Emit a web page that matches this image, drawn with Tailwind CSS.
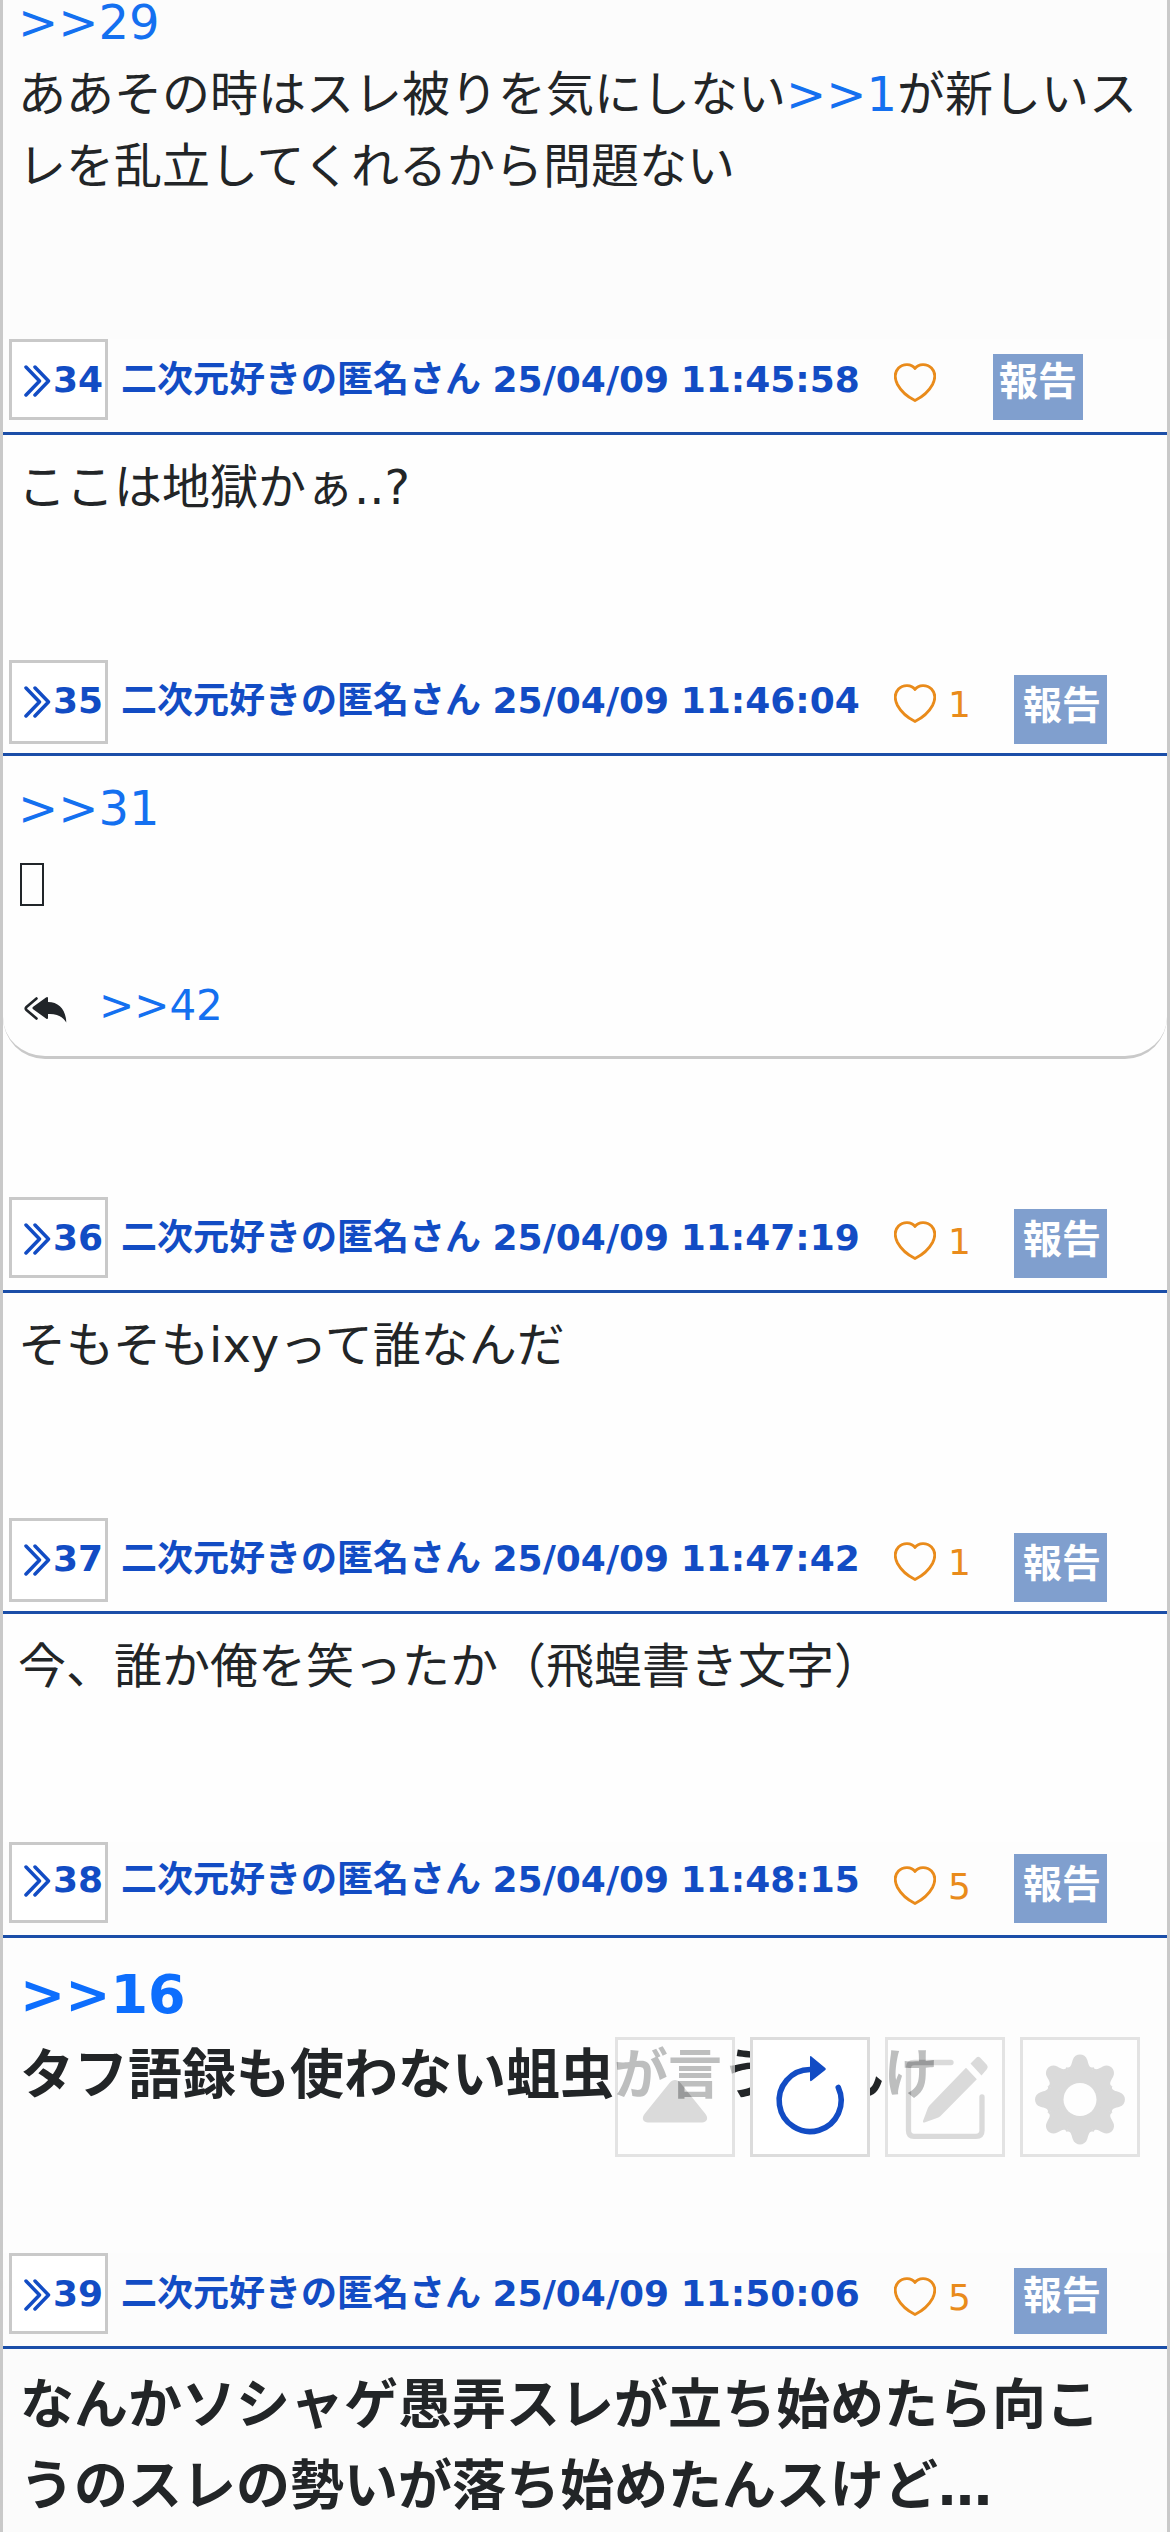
<!DOCTYPE html>
<html lang="ja"><head><meta charset="utf-8"><title>スレッド</title>
<script src="https://cdn.jsdelivr.net/npm/@tailwindcss/browser@4"></script></head>
<body class="bg-white">
<svg class="hidden">
<symbol id="chev" viewBox="0 0 27 32"><path d="M2 2 15.500 16 2 30M11 2 24.500 16 11 30" fill="none" stroke="currentColor" stroke-width="3.500" stroke-linecap="round" stroke-linejoin="round"/></symbol>
<symbol id="heart" viewBox="0 0 42 39"><path d="M21 5.500C17.500 .3 9 .3 4.500 5C.5 9.200.5 15.500 3.500 21.500C7 28 14 34 21 37.500C28 34 35 28 38.500 21.500C41.500 15.500 41.500 9.200 37.500 5C33 .3 24.500 .3 21 5.500Z" fill="none" stroke="currentColor" stroke-width="2.800" stroke-linejoin="round"/></symbol>
</svg>
<main class="relative flex h-[2532px] flex-col overflow-hidden border-x-3 border-[#c9c9c9] font-['DejaVu_Sans','Noto_Sans_CJK_JP',sans-serif] text-[48px] leading-[72px] text-[#222527]">

<article class="h-[339px] shrink-0 bg-[#fcfcfc] pl-[15px]">
<p class="-mt-[14px] whitespace-nowrap"><a class="text-[#1470f0]">&gt;&gt;29</a><br>ああその時はスレ被りを気にしない<a class="text-[#1470f0]">&gt;&gt;1</a>が新しいス<br>レを乱立してくれるから問題ない</p>
</article>
<header class="flex h-[96px] shrink-0 border-b-3 border-[#1b4ea8] bg-[#fdfdfd] pl-1.5 text-[36px] leading-[54px] font-bold text-[#124cc4]">
<div class="flex h-[81px] w-[99px] border-3 border-[#c9c9c9] bg-white pt-[11px] pl-3"><svg class="mt-3 mr-[2px] h-8 w-[27px] shrink-0"><use href="#chev"/></svg>34</div>
<div class="ml-[13px] w-[740px] pt-[14px] [word-spacing:-1px] whitespace-nowrap">二次元好きの匿名さん 25/04/09 11:45:58</div>
<div class="ml-[33px] flex w-[99px] pt-6 font-normal text-[#e98b1b]"><svg class="h-[39px] w-[42px]"><use href="#heart"/></svg></div>
<div class="mt-[15px] h-[66px] w-[90px] bg-[#809fce] pt-px pl-[6px] text-[39px] text-white">報告</div>
</header>

<article class="h-[225px] shrink-0 bg-[#fefefe] pt-4 pl-[15px]"><p>ここは地獄かぁ..?</p></article>
<header class="flex h-[96px] shrink-0 border-b-3 border-[#1b4ea8] bg-[#fefefe] pl-1.5 text-[36px] leading-[54px] font-bold text-[#124cc4]">
<div class="flex h-[84px] w-[99px] border-3 border-[#c9c9c9] bg-white pt-[11px] pl-3"><svg class="mt-3 mr-[2px] h-8 w-[27px] shrink-0"><use href="#chev"/></svg>35</div>
<div class="ml-[13px] w-[740px] pt-[14px] [word-spacing:-1px] whitespace-nowrap">二次元好きの匿名さん 25/04/09 11:46:04</div>
<div class="ml-[33px] flex w-[120px] gap-3 pt-[18px] font-normal text-[#e98b1b]"><svg class="mt-1.5 h-[39px] w-[42px]"><use href="#heart"/></svg>1</div>
<div class="mt-[15px] h-[69px] w-[93px] bg-[#809fce] pt-[4px] pl-[9px] text-[39px] text-white">報告</div>
</header>

<article class="h-[441px] shrink-0 bg-[#fefefe]">
<div class="h-[303px] rounded-b-[42px] border-b-3 border-[#c9c9c9] pt-4 pl-[15px]">
<p class="text-[#1470f0]">&gt;&gt;31</p>
<div class="mt-[19px] ml-[2px] h-[43px] w-6 border-[2.500px] border-[#212529]"></div>
<div class="mt-[68px] flex pl-[5px] text-[42px] leading-[63px]">
<svg class="mt-[22px] h-[27px] w-[45px]" viewBox="0 0 45 27"><path d="M13.500 2.500 3.500 11C2.500 12 2.500 13 3.500 14L13.500 22.500" fill="none" stroke="#212529" stroke-width="2.600" stroke-linecap="round"/><path d="M23 1.500C24.300.5 25 1 25 2.500V6C36 6 43 14 43.300 26.500C39.500 20 33 17.500 25 18V21.500C25 23 24.300 23.500 23 22.500L10.500 13.500C9 12.500 9 11.500 10.500 10.500Z" fill="#212529"/></svg>
<a class="ml-[31px] text-[#1470f0]">&gt;&gt;42</a></div>
</div>
</article>
<header class="flex h-[96px] shrink-0 border-b-3 border-[#1b4ea8] bg-[#fefefe] pl-1.5 text-[36px] leading-[54px] font-bold text-[#124cc4]">
<div class="flex h-[81px] w-[99px] border-3 border-[#c9c9c9] bg-white pt-[11px] pl-3"><svg class="mt-3 mr-[2px] h-8 w-[27px] shrink-0"><use href="#chev"/></svg>36</div>
<div class="ml-[13px] w-[740px] pt-[14px] [word-spacing:-1px] whitespace-nowrap">二次元好きの匿名さん 25/04/09 11:47:19</div>
<div class="ml-[33px] flex w-[120px] gap-3 pt-[18px] font-normal text-[#e98b1b]"><svg class="mt-1.5 h-[39px] w-[42px]"><use href="#heart"/></svg>1</div>
<div class="mt-3 h-[69px] w-[93px] bg-[#809fce] pt-[4px] pl-[9px] text-[39px] text-white">報告</div>
</header>

<article class="h-[225px] shrink-0 bg-[#fefefe] pt-4 pl-[15px]"><p>そもそもixyって誰なんだ</p></article>
<header class="flex h-[96px] shrink-0 border-b-3 border-[#1b4ea8] bg-[#fefefe] pl-1.5 text-[36px] leading-[54px] font-bold text-[#124cc4]">
<div class="flex h-[84px] w-[99px] border-3 border-[#c9c9c9] bg-white pt-[11px] pl-3"><svg class="mt-3 mr-[2px] h-8 w-[27px] shrink-0"><use href="#chev"/></svg>37</div>
<div class="ml-[13px] w-[740px] pt-[14px] [word-spacing:-1px] whitespace-nowrap">二次元好きの匿名さん 25/04/09 11:47:42</div>
<div class="ml-[33px] flex w-[120px] gap-3 pt-[18px] font-normal text-[#e98b1b]"><svg class="mt-1.5 h-[39px] w-[42px]"><use href="#heart"/></svg>1</div>
<div class="mt-[15px] h-[69px] w-[93px] bg-[#809fce] pt-[4px] pl-[9px] text-[39px] text-white">報告</div>
</header>

<article class="h-[228px] shrink-0 bg-[#fefefe] pt-4 pl-[15px]"><p>今、誰か俺を笑ったか（飛蝗書き文字）</p></article>
<header class="flex h-[96px] shrink-0 border-b-3 border-[#1b4ea8] bg-[#fdfdfd] pl-1.5 text-[36px] leading-[54px] font-bold text-[#124cc4]">
<div class="flex h-[81px] w-[99px] border-3 border-[#c9c9c9] bg-white pt-2 pl-3"><svg class="mt-3 mr-[2px] h-8 w-[27px] shrink-0"><use href="#chev"/></svg>38</div>
<div class="ml-[13px] w-[740px] pt-[11px] [word-spacing:-1px] whitespace-nowrap">二次元好きの匿名さん 25/04/09 11:48:15</div>
<div class="ml-[33px] flex w-[120px] gap-3 pt-[18px] font-normal text-[#e98b1b]"><svg class="mt-1.5 h-[39px] w-[42px]"><use href="#heart"/></svg>5</div>
<div class="mt-3 h-[69px] w-[93px] bg-[#809fce] pt-[4px] pl-[9px] text-[39px] text-white">報告</div>
</header>

<article class="h-[315px] shrink-0 bg-[#fdfdfd] pt-4 pl-[17px] text-[54px] leading-[81px] font-bold"><p class="whitespace-nowrap"><a class="text-[#0d6efd]">&gt;&gt;16</a><br>タフ語録も使わない蛆虫が言うもんけ</p></article>
<header class="flex h-[96px] shrink-0 border-b-3 border-[#1b4ea8] bg-[#fcfcfc] pl-1.5 text-[36px] leading-[54px] font-bold text-[#124cc4]">
<div class="flex h-[81px] w-[99px] border-3 border-[#c9c9c9] bg-white pt-[11px] pl-3"><svg class="mt-3 mr-[2px] h-8 w-[27px] shrink-0"><use href="#chev"/></svg>39</div>
<div class="ml-[13px] w-[740px] pt-[14px] [word-spacing:-1px] whitespace-nowrap">二次元好きの匿名さん 25/04/09 11:50:06</div>
<div class="ml-[33px] flex w-[120px] gap-3 pt-[18px] font-normal text-[#e98b1b]"><svg class="mt-1.5 h-[39px] w-[42px]"><use href="#heart"/></svg>5</div>
<div class="mt-[15px] h-[66px] w-[93px] bg-[#809fce] pt-px pl-[9px] text-[39px] text-white">報告</div>
</header>
<article class="h-[183px] shrink-0 bg-[#fbfbfb] pt-4 pl-[17px] text-[54px] leading-[81px] font-bold"><p class="whitespace-nowrap">なんかソシャゲ愚弄スレが立ち始めたら向こ<br>うのスレの勢いが落ち始めたんスけど…</p></article>

<!-- floating toolbar -->
<nav class="absolute top-[2037px] right-[27px] flex gap-[15px] text-[#ccc]">
<div class="size-[120px] border-3 border-[#d9d9d9] bg-white opacity-70"><svg class="-m-[3px] size-[120px]" viewBox="0 0 120 120"><path d="M54.500 46C57.500 42 62.500 42 65.500 46L90.500 77C94 81.500 91.500 85.500 87 85.500H33C28.500 85.500 26 81.500 29.500 77Z" fill="currentColor"/></svg></div>
<div class="size-[120px] border-3 border-[#dcdcdc] bg-white text-[#124cc4]"><svg class="-m-[3px] size-[120px]" viewBox="0 0 120 120"><path d="M60 32.500A31 31 0 1 0 88.300 50.500" fill="none" stroke="currentColor" stroke-width="5.600" stroke-linecap="round"/><path d="M60 20.500Q60 18 62 20L75.300 31Q76.500 32 75.300 33L62 43.500Q60 45 60 43Z" fill="currentColor"/></svg></div>
<div class="size-[120px] border-3 border-[#d9d9d9] bg-white opacity-70"><svg class="-m-[3px] size-[120px]" viewBox="0 0 120 120"><path d="M66 25.500H29Q23.500 25.500 23.500 31V93.500Q23.500 99.300 29 99.300H91Q97 99.300 97 93.500V60" fill="none" stroke="currentColor" stroke-width="5.300" stroke-linecap="round"/><path d="M81 30.700 91.800 42.300 55.500 79Q54 80.500 52 81L39.500 85.500Q37.500 86 38 84L42.500 72Q43 70 44.500 68.500ZM85.500 26.500 91.500 20.500Q93 19 95 20.500L102 28Q103.500 30 102 32L96.500 38.500Z" fill="currentColor"/></svg></div>
<div class="size-[120px] border-3 border-[#d9d9d9] bg-white opacity-70"><svg class="-m-[3px] size-[120px]" viewBox="-60 -62.500 120 120"><circle r="31.500" fill="currentColor"/><g fill="currentColor">
<path id="g" d="M-13.500-32.300C-9-30.500-8.500-36-7.300-39.500C-5-46.800 5-46.800 7.300-39.500C8.500-36 9-30.500 13.500-32.300L0 0Z"/><use href="#g" transform="rotate(45)"/><use href="#g" transform="rotate(90)"/><use href="#g" transform="rotate(135)"/><use href="#g" transform="rotate(180)"/><use href="#g" transform="rotate(225)"/><use href="#g" transform="rotate(270)"/><use href="#g" transform="rotate(315)"/></g><circle r="16.500" fill="#fff"/></svg></div>
</nav>
</main></body></html>
